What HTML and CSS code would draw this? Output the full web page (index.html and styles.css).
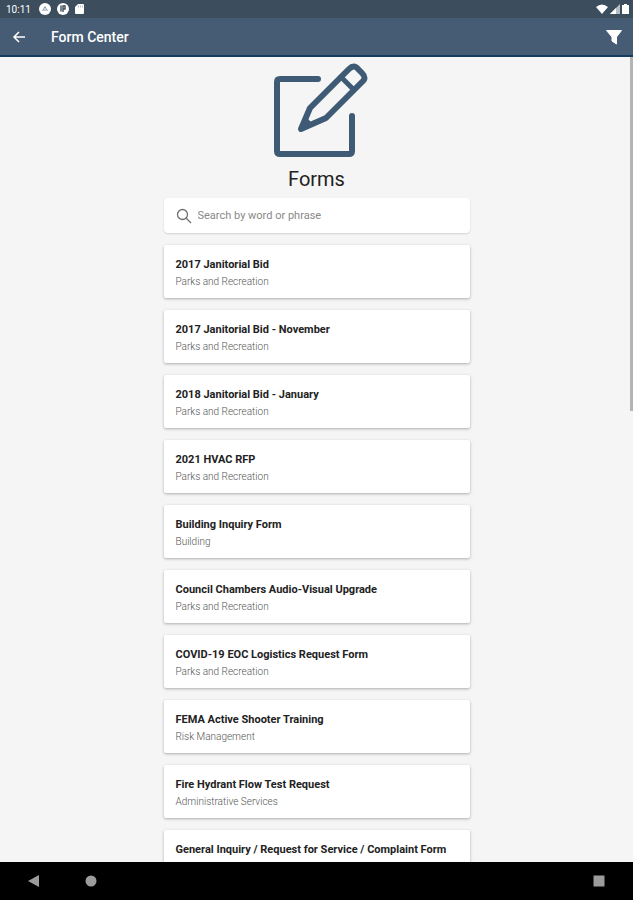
FILE: index.html
```html
<!DOCTYPE html>
<html lang="en">
<head>
    <meta charset="UTF-8">
    <meta name="viewport" content="width=device-width, initial-scale=1.0">
    <title>Form Center</title>
    <link rel="stylesheet" href="styles.css">
</head>
<body>
    <div class="status-bar">
        <span class="clock">10:11</span>
        <svg width="12" height="12" viewBox="0 0 12 12"><circle cx="6" cy="6" r="6" fill="#fff"/><path d="M3.5 8 6 3.500 8.500 8M4.700 7h2.600" fill="none" stroke="#8a98a6"/></svg>
        <svg width="12" height="12" viewBox="0 0 12 12"><circle cx="6" cy="6" r="6" fill="#fff"/><path d="M4 2.500v6M6 9V3h2v3H6" fill="none" stroke="#3c4d5d" stroke-width="1.400"/></svg>
        <svg width="9" height="10" viewBox="0 0 9 10"><path d="M3 0h5a1 1 0 0 1 1 1v8a1 1 0 0 1-1 1H1a1 1 0 0 1-1-1V3z" fill="#fff"/><path d="M3.500 1.500v2M5.500 1.500v2M7.500 1.500v2" stroke="#9aa6b1" stroke-width=".7"/></svg>
        <div class="signals">
            <svg width="12" height="10" viewBox="0 0 12 10"><path d="M0 3Q6-2 12 3L6 10z" fill="#fff"/></svg>
            <svg width="10" height="10" viewBox="0 0 10 10"><path d="M0 10 10 0v10z" fill="#b5bec6"/><path d="M0 10 6 4v6z" fill="#fff"/></svg>
            <svg width="7" height="10" viewBox="0 0 7 10"><path d="M2 0h3v1h2v9H0V1h2z" fill="#fff"/></svg>
        </div>
    </div>
    <header class="app-bar">
        <button class="icon-button" type="button" aria-label="Back">
            <svg width="14" height="14" viewBox="0 0 14 14"><path d="M13 7H2M7 2 2 7l5 5" fill="none" stroke="#fff" stroke-width="1.500"/></svg>
        </button>
        <h1 class="app-title">Form Center</h1>
        <button class="icon-button" type="button" aria-label="Filter">
            <svg width="18" height="16" viewBox="0 0 18 16"><path d="M1.500 1.500h15L11.500 8v7l-4.500-3V8z" fill="#fff" stroke="#fff" stroke-linejoin="round"/></svg>
        </button>
    </header>
    <main class="content">
        <div class="scroll-area">
            <div class="column">
                <svg class="forms-icon" width="102" height="96" viewBox="-7 0 102 96">
                    <g fill="none" stroke="#3f5a75" stroke-width="6" stroke-linecap="round" stroke-linejoin="round">
                        <path d="M45 17H7q-3 0-3 3v69q0 3 3 3h69q3 0 3-3V54"/>
                        <path d="M28 67 37 46 76 7q5-5 9 0l4 4q5 5 0 9L53 56z"/>
                        <path d="m68 15 13 13" stroke-width="5"/>
                    </g>
                    <path d="m28 67 5-12 7 7z" fill="#3f5a75"/>
                </svg>
                <h2 class="page-title">Forms</h2>
                <div class="search-box">
                    <svg width="16" height="16" viewBox="0 0 16 16"><g fill="none" stroke="#707070" stroke-width="1.300"><circle cx="6.500" cy="6.500" r="5"/><path d="m10 10 5 5"/></g></svg>
                    <input class="search-input" type="search" aria-label="Search forms" placeholder="Search by word or phrase">
                </div>
                <ul class="form-list">
                    <li><a class="form-card" href="#"><span class="form-name">2017 Janitorial Bid</span><span class="form-category">Parks and Recreation</span></a></li>
                    <li><a class="form-card" href="#"><span class="form-name">2017 Janitorial Bid - November</span><span class="form-category">Parks and Recreation</span></a></li>
                    <li><a class="form-card" href="#"><span class="form-name">2018 Janitorial Bid - January</span><span class="form-category">Parks and Recreation</span></a></li>
                    <li><a class="form-card" href="#"><span class="form-name">2021 HVAC RFP</span><span class="form-category">Parks and Recreation</span></a></li>
                    <li><a class="form-card" href="#"><span class="form-name">Building Inquiry Form</span><span class="form-category">Building</span></a></li>
                    <li><a class="form-card" href="#"><span class="form-name">Council Chambers Audio-Visual Upgrade</span><span class="form-category">Parks and Recreation</span></a></li>
                    <li><a class="form-card" href="#"><span class="form-name">COVID-19 EOC Logistics Request Form</span><span class="form-category">Parks and Recreation</span></a></li>
                    <li><a class="form-card" href="#"><span class="form-name">FEMA Active Shooter Training</span><span class="form-category">Risk Management</span></a></li>
                    <li><a class="form-card" href="#"><span class="form-name">Fire Hydrant Flow Test Request</span><span class="form-category">Administrative Services</span></a></li>
                    <li><a class="form-card" href="#"><span class="form-name">General Inquiry / Request for Service / Complaint Form</span></a></li>
                </ul>
            </div>
        </div>
        <div class="scroll-thumb"></div>
    </main>
    <nav class="nav-bar">
        <button class="icon-button" type="button" aria-label="System back">
            <svg width="12" height="12" viewBox="0 0 12 12"><path d="M11 0v12L0 6z" fill="#9c9c9c"/></svg>
        </button>
        <button class="icon-button" type="button" aria-label="Home">
            <svg width="12" height="12" viewBox="0 0 12 12"><circle cx="6" cy="6" r="5.500" fill="#9c9c9c"/></svg>
        </button>
        <button class="icon-button recents" type="button" aria-label="Recent apps">
            <svg width="12" height="12" viewBox="0 0 12 12"><path d="M.5.5h11v11H.5z" fill="#9c9c9c"/></svg>
        </button>
    </nav>
</body>
</html>
```
FILE: styles.css
```css
* {
    box-sizing: border-box;
}
body {
    display: flex;
    flex-direction: column;
    height: 100vh;
    margin: 0;
    font-family: Roboto, sans-serif;
    background-color: #f5f5f5;
}
svg {
    display: block;
    flex-shrink: 0;
}
.status-bar {
    display: flex;
    align-items: center;
    gap: 6px;
    height: 18px;
    padding: 0 4px 0 6px;
    background-color: #3c4d5d;
    color: #fff;
}
.clock {
    font-size: 10px;
    margin-right: 2px;
}
.signals {
    display: flex;
    gap: 2px;
    margin-left: auto;
}
.app-bar {
    display: flex;
    align-items: center;
    height: 39px;
    padding: 0 10px 0 12px;
    background-color: #465c75;
    border-bottom: 2px solid #173c62;
    color: #fff;
}
.app-title {
    flex: 1;
    margin: 0 0 0 25px;
    font-size: 14px;
    font-weight: 500;
}
.icon-button {
    padding: 0;
    border: none;
    background: none;
    cursor: pointer;
}
.content {
    position: relative;
    flex: 1;
    min-height: 0;
}
.scroll-area {
    height: 100%;
    overflow-y: auto;
    scrollbar-width: none;
}
.scroll-thumb {
    position: absolute;
    top: 0;
    right: 0;
    width: 3px;
    height: 44%;
    background-color: #b4b4b4;
}
.column {
    max-width: 330px;
    margin: 0 auto;
    padding: 5px 12px 12px;
}
.forms-icon {
    margin: 0 auto;
}
.page-title {
    margin: 8px 0 6px;
    font-size: 20px;
    font-weight: 400;
    line-height: 26px;
    text-align: center;
    color: #222;
}
.search-box {
    display: flex;
    align-items: center;
    gap: 6px;
    height: 35px;
    padding: 0 12px;
    border-radius: 4px;
    background-color: #fff;
    box-shadow: 0 1px 2px rgba(0, 0, 0, 0.15);
}
.search-input {
    flex: 1;
    min-width: 0;
    padding: 0;
    border: none;
    outline: none;
    background: none;
    font-family: inherit;
    font-size: 11px;
}
.search-input::placeholder {
    color: #888;
}
.form-list {
    display: grid;
    gap: 12px;
    margin: 12px 0 0;
    padding: 0;
    list-style: none;
}
.form-card {
    display: block;
    min-height: 53px;
    padding: 11px 12px 8px;
    border-radius: 2px;
    background-color: #fff;
    box-shadow: 0 1px 3px rgba(0, 0, 0, 0.3);
    text-decoration: none;
}
.form-name, .form-category {
    display: block;
    line-height: 17px;
}
.form-name {
    font-size: 11px;
    font-weight: 700;
    color: #222;
}
.form-category {
    font-size: 10px;
    font-weight: 300;
    color: #555;
}
.nav-bar {
    display: flex;
    align-items: center;
    gap: 45px;
    height: 38px;
    padding: 0 28px;
    background-color: #000;
}
.recents {
    margin-left: auto;
}
```
